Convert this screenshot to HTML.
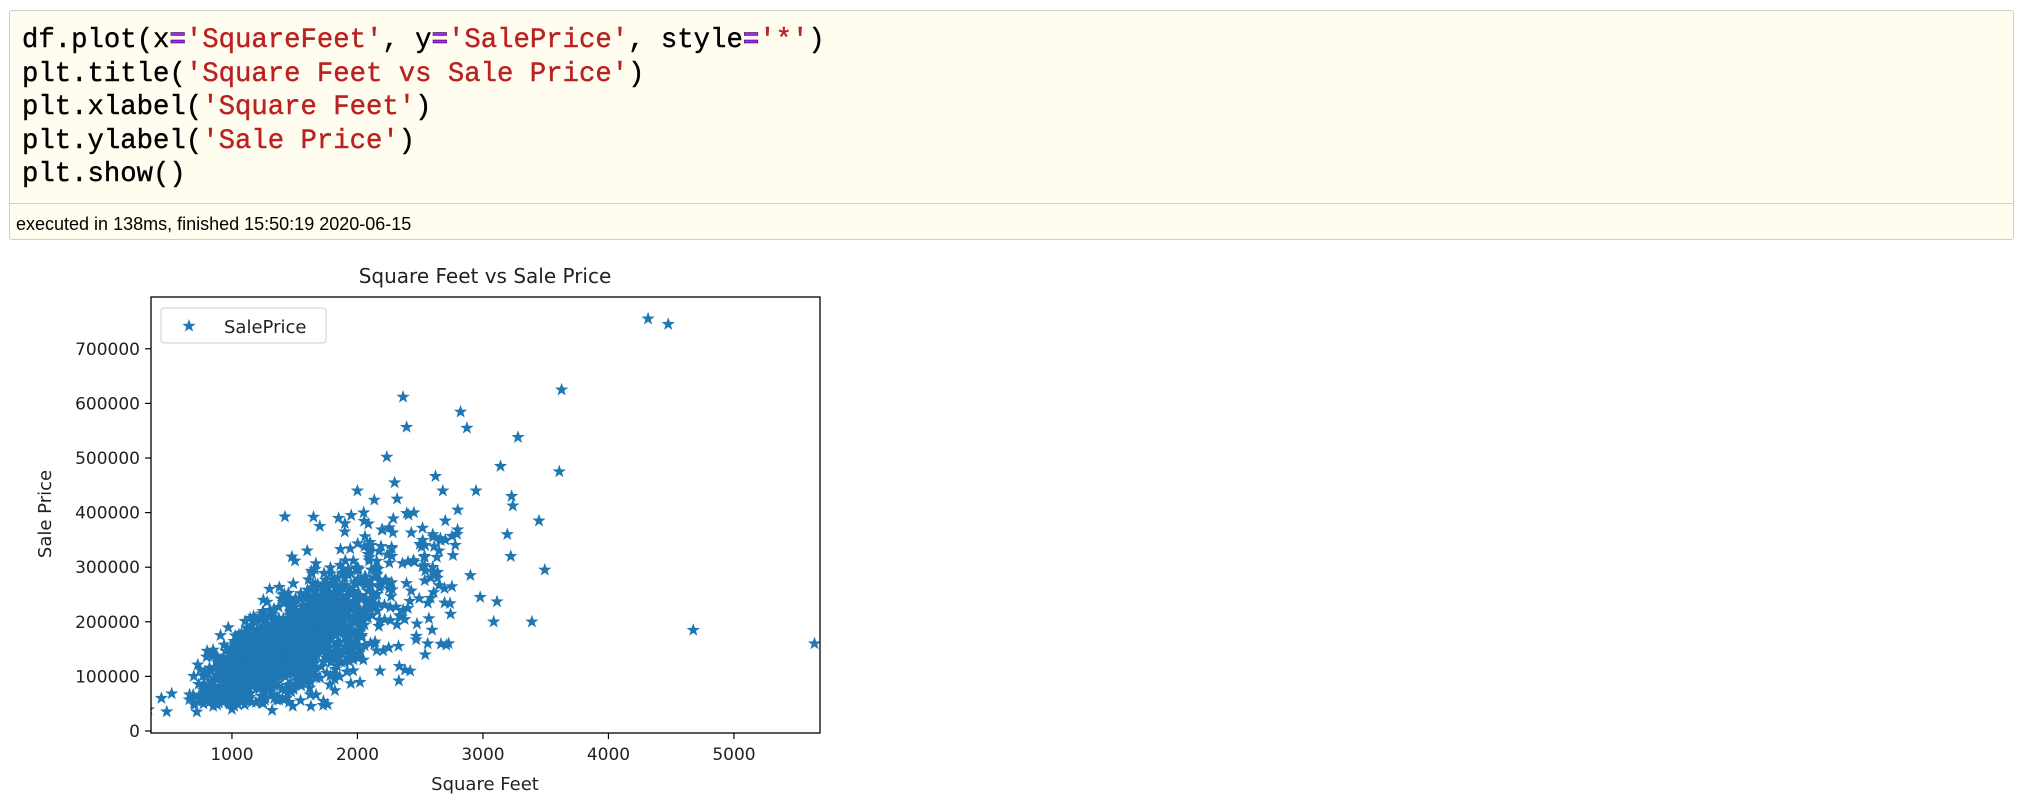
<!DOCTYPE html>
<html><head><meta charset="utf-8">
<style>
html,body{margin:0;padding:0;background:#fff;width:2022px;height:805px;overflow:hidden}
.cell{position:absolute;left:9px;top:10px;width:2003px;height:228px;border:1px solid #cfcfcf;border-radius:3px;background:#fffdef}
.code{position:absolute;left:12px;top:13px;font-family:"Liberation Mono",monospace;font-size:27.3px;line-height:33.6px;color:#000;white-space:pre;-webkit-text-stroke:0.4px #000}
.s{color:#ba2121;-webkit-text-stroke:0.4px #ba2121}.o{color:#aa22ff;font-weight:bold}
.sep{position:absolute;left:0;right:0;top:192px;border-top:1px solid #cfcfcf}
.ex{position:absolute;left:6px;top:203px;font-family:"Liberation Sans",sans-serif;font-size:18px;color:#000}
svg{position:absolute;left:0;top:0}
</style></head><body>
<div class="cell">
<div class="code">df.plot(x<span class="o">=</span><span class="s">'SquareFeet'</span>, y<span class="o">=</span><span class="s">'SalePrice'</span>, style<span class="o">=</span><span class="s">'*'</span>)
plt.title(<span class="s">'Square Feet vs Sale Price'</span>)
plt.xlabel(<span class="s">'Square Feet'</span>)
plt.ylabel(<span class="s">'Sale Price'</span>)
plt.show()</div>
<div class="sep"></div>
<div class="ex">executed in 138ms, finished 15:50:19 2020-06-15</div>
</div>
<svg width="2022" height="805" xmlns="http://www.w3.org/2000/svg" font-family="DejaVu Sans, sans-serif">
<defs>
<clipPath id="c"><rect x="151" y="297" width="669" height="436"/></clipPath>
<path id="st" d="M0,-7 L1.65,-2.27 L6.66,-2.16 L2.67,0.87 L4.11,5.66 L0,2.8 L-4.11,5.66 L-2.67,0.87 L-6.66,-2.16 L-1.65,-2.27Z" fill="#1f77b4"/>
</defs>
<g id="pts" clip-path="url(#c)"></g>
<rect x="151" y="297" width="669" height="436" fill="none" stroke="#000" stroke-width="1.3"/>
<text x="485" y="283" text-anchor="middle" font-size="20" fill="#222">Square Feet vs Sale Price</text>
<g id="ticks" font-size="17" fill="#222"></g>
<text x="485" y="790" text-anchor="middle" font-size="18" fill="#222">Square Feet</text>
<text transform="translate(51,514) rotate(-90)" text-anchor="middle" font-size="18" fill="#222">Sale Price</text>
<rect x="161" y="308" width="165" height="35" rx="3" fill="#fff" fill-opacity="0.8" stroke="#ccc"/>
<use href="#st" x="189" y="326"/>
<text x="224" y="333" font-size="18" fill="#222">SalePrice</text>
</svg>
<script>
var X=function(s){return 151+(s-355)*0.1255},Y=function(p){return 731-p*0.000546};
var g=document.getElementById('pts'),t=document.getElementById('ticks'),NS='http://www.w3.org/2000/svg';
function star(x,y){var u=document.createElementNS(NS,'use');u.setAttribute('href','#st');u.setAttribute('x',x.toFixed(1));u.setAttribute('y',y.toFixed(1));g.appendChild(u);}
var seed=11;function r(){seed=(seed*16807)%2147483647;return seed/2147483647;}
function n(){return Math.sqrt(-2*Math.log(r()+1e-9))*Math.cos(6.2832*r());}
for(var i=0;i<1500;i++){var s=1450*Math.exp(0.28*n());if(s>2800)s=2800-300*r();if(s<600)s=600+200*r();var p=s*(118+28*n())-12000+22000*n();if(p<45000)p=45000+25000*r();if(p>400000)p=380000-40000*r();star(X(s),Y(p));}
var o=[[4316,755000],[4476,745000],[3627,625000],[2364,611657],[2822,584500],[2392,556581],[2872,555000],[3279,538000],[2234,501837],[3140,485000],[3608,475000],[2622,466500],[1422,392500],[4676,184750],[5642,160000],[3493,295000],[3447,385000],[3228,430000],[3238,412500],[3194,360000],[3222,320000],[2945,440000],[2296,455000],[2000,440000],[2134,423000],[3086,200000],[3390,200000],[2978,245000],[3112,237000],[334,39300],[480,35311],[438,60000],[520,68500],[720,35000],[1000,40000],[1320,37900],[2316,425000],[2680,440000],[2800,405000],[2450,400000],[1950,395000],[2700,385000],[2900,285000],[2540,140000],[2560,160000],[2420,110000],[2330,92000],[2180,110000],[1780,85000],[1650,392000],[1700,375000],[1850,390000],[1900,380000],[2050,400000],[1600,330000],[1300,260000],[1250,240000],[1180,180000],[2650,330000],[2600,300000],[2700,350000]];
o.forEach(function(a){star(X(a[0]),Y(a[1]));});
function tx(x,y,s,a,h){var e=document.createElementNS(NS,'text');e.setAttribute('x',x);e.setAttribute('y',y);e.setAttribute('text-anchor',a);e.textContent=s;t.appendChild(e);}
function ln(x1,y1,x2,y2){var e=document.createElementNS(NS,'line');e.setAttribute('x1',x1);e.setAttribute('y1',y1);e.setAttribute('x2',x2);e.setAttribute('y2',y2);e.setAttribute('stroke','#000');e.setAttribute('stroke-width','1.2');t.appendChild(e);}
for(var k=0;k<=7;k++){var y=Y(k*100000);ln(145,y,151,y);tx(140,y+6,String(k*100000),'end');}
for(var k=1;k<=5;k++){var x=X(k*1000);ln(x,733,x,739);tx(x,760,String(k*1000),'middle');}
</script>
</body></html>
